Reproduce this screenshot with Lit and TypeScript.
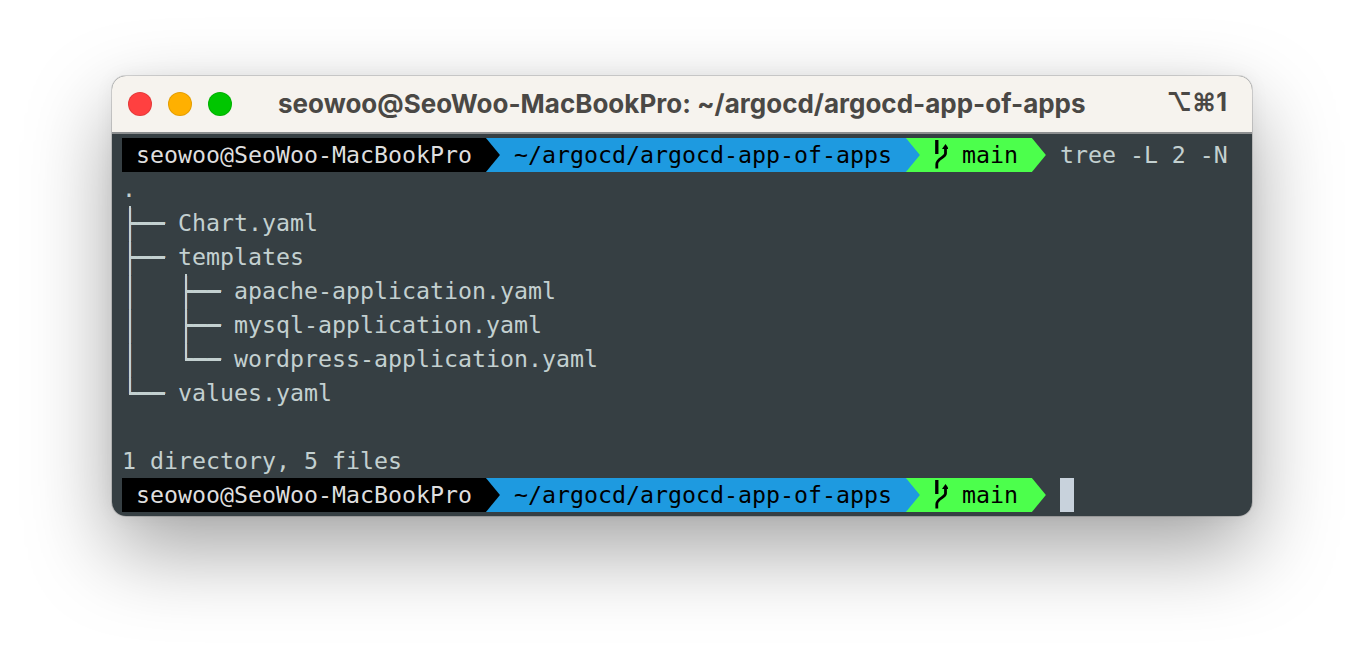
import { LitElement, html, css } from "lit";
import { customElement } from "lit/decorators.js";

const prompt = (trail: unknown = "") => html`<div class="row">
  <span class="seg black">&nbsp;seowoo@SeoWoo-MacBookPro&nbsp;</span>
  <span class="arrow black-on-blue"></span>
  <span class="seg blue">&nbsp;~/argocd/argocd-app-of-apps&nbsp;</span>
  <span class="arrow blue-on-green"></span>
  <span class="seg green">&nbsp;<svg class="branch" viewBox="0 0 14 34"><path d="M2.800 2v14" fill="none" stroke="#000" stroke-width="3.300"/><path d="M11.500 9v6.500c0 4-8.700 5-8.700 10.500v4.500" fill="none" stroke="#000" stroke-width="2.800"/><path d="M8 11l3.500-5 3.500 5z" fill="#000"/></svg>&nbsp;main&nbsp;</span>
  <span class="arrow green-end"></span>
  ${trail}
</div>`;

const tree = (kind: string, prefix: string, name: string) =>
  html`<div class="row ${kind}"><span class="box">${prefix}</span><span>${name}</span></div>`;

@customElement("app-root")
export class AppRoot extends LitElement {
  static styles = css`
    :host { display: block; width: 1364px; height: 664px; background: #fff; overflow: hidden; }
    .page { padding: 76px 112px 0; }
    .window { width: 1140px; height: 440px; box-sizing: border-box; border-radius: 14px; background: #363f43; overflow: hidden;
      box-shadow: 0 0 0 1px rgba(0,0,0,.14), 0 34px 84px rgba(0,0,0,.36), 0 0 20px rgba(0,0,0,.05); }
    .title { box-sizing: border-box; height: 58px; background: #f6f3ee; border-bottom: 2px solid #8d8f90; display: flex; align-items: center; padding: 0 25px 0 16px; font-family: Inter, "Liberation Sans", sans-serif; color: #4a4845; }
    .lights { display: flex; gap: 16px; }
    .light { width: 24px; height: 24px; border-radius: 50%; box-sizing: border-box; border: 1px solid rgba(0,0,0,.1); }
    .red { background: #ff4040; } .yellow { background: #ffb000; } .lime { background: #00c600; }
    .name { flex: 1; padding: 0 0 2px 46px; font-size: 26px; font-weight: 700; white-space: nowrap; }
    .keys { padding-bottom: 4px; font-size: 25px; font-weight: 700; font-family: Inter, "DejaVu Sans", sans-serif; white-space: nowrap; }
    .term { padding: 4px 0 0 10px; font-family: "DejaVu Sans Mono", monospace; font-size: 23.25px; line-height: 34px; color: #c3d0d0; }
    .row { display: flex; height: 34px; white-space: pre; }
    .seg { display: inline-flex; height: 34px; align-items: center; }
    .black { background: #000; color: #dedede; }
    .blue { background: #1e9ae0; color: #000; }
    .green { background: #4cff4c; color: #000; }
    .arrow { display: block; width: 14px; height: 34px; flex: none; position: relative; }
    .arrow::before { content: ""; position: absolute; inset: 0; clip-path: polygon(0 0, 100% 50%, 0 100%); }
    .black-on-blue { background: #1e9ae0; } .black-on-blue::before { background: #000; }
    .blue-on-green { background: #4cff4c; } .blue-on-green::before { background: #1e9ae0; }
    .green-end::before { background: #4cff4c; }
    .branch { width: 14px; height: 34px; display: block; flex: none; }
    .box { display: inline-block; font-family: "Liberation Mono", monospace; font-size: 23.334px; transform: translate(1px, 1.5px) scaleY(1.26); transform-origin: 50% 50%; }
    .tee, .last, .sub-tee, .sub-last {
      background-image: linear-gradient(#c3d0d0, #c3d0d0), linear-gradient(#c3d0d0, #c3d0d0), linear-gradient(#c3d0d0, #c3d0d0);
      background-repeat: no-repeat;
    }
    .tee { background-position: 7px 0, 8px 17px, 0 0; background-size: 2px 34px, 35px 2px, 0 0; }
    .last { background-position: 7px 0, 8px 17px, 0 0; background-size: 2px 19px, 35px 2px, 0 0; }
    .sub-tee { background-position: 7px 0, 63px 0, 64px 17px; background-size: 2px 34px, 2px 34px, 35px 2px; }
    .sub-last { background-position: 7px 0, 63px 0, 64px 17px; background-size: 2px 34px, 2px 19px, 35px 2px; }
    .cmd { padding-left: 14px; }
    .cursor { width: 14px; height: 34px; background: #c8d2dc; margin-left: 14px; }
  `;

  render() {
    return html`<div class="page"><div class="window">
      <div class="title">
        <div class="lights"><div class="light red"></div><div class="light yellow"></div><div class="light lime"></div></div>
        <div class="name">seowoo@SeoWoo-MacBookPro: ~/argocd/argocd-app-of-apps</div>
        <div class="keys">⌥⌘1</div>
      </div>
      <div class="term">
        ${prompt(html`<span class="cmd">tree -L 2 -N</span>`)}
        <div class="row">.</div>
        ${tree("tee", "├── ", "Chart.yaml")}
        ${tree("tee", "├── ", "templates")}
        ${tree("sub-tee", "│   ├── ", "apache-application.yaml")}
        ${tree("sub-tee", "│   ├── ", "mysql-application.yaml")}
        ${tree("sub-last", "│   └── ", "wordpress-application.yaml")}
        ${tree("last", "└── ", "values.yaml")}
        <div class="row"> </div>
        <div class="row">1 directory, 5 files</div>
        ${prompt(html`<span class="cursor"></span>`)}
      </div>
    </div></div>`;
  }
}
